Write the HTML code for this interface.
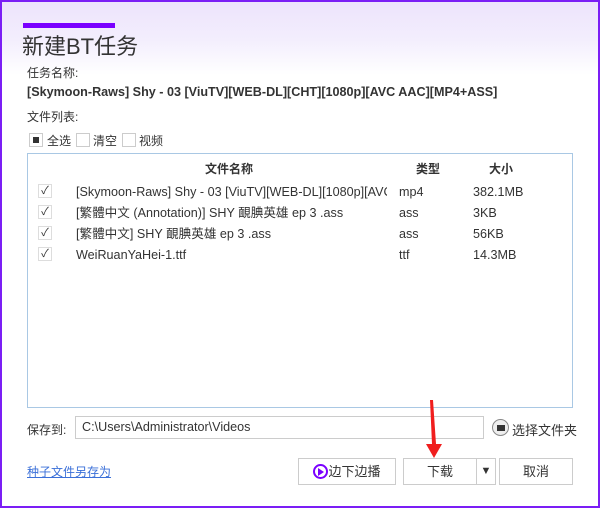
<!DOCTYPE html>
<html><head><meta charset="utf-8"><style>
*{margin:0;padding:0;box-sizing:border-box}
body{width:600px;height:508px;overflow:hidden;background:#fff;font-family:"Liberation Sans","Noto Sans CJK SC",sans-serif;color:#333;font-size:12px}
.win{position:absolute;left:0;top:0;width:600px;height:508px;background:linear-gradient(#ece3fc 0px,#f3eefd 40px,#fff 75px)}
.bd{position:absolute;left:0;top:0;width:600px;height:508px;border:2px solid #7b1ef5;pointer-events:none}
.a{position:absolute;white-space:nowrap}
.cb{position:absolute;width:14px;height:14px;border:1px solid #ccc;background:#fff}
.ck{position:absolute;width:14px;height:14px;border:1px solid #ddd;background:#fff;font-size:11px;line-height:12px;text-align:center;color:#333}
.btn{position:absolute;height:27px;border:1px solid #ccc;background:#fff;font-size:13px;text-align:center;line-height:25px}
</style></head><body><div class="win">
<div class="a" style="left:23px;top:23px;width:92px;height:5px;background:#7a00ff"></div>
<div class="a" style="left:22px;top:29px;font-size:22px;color:#333">新建BT任务</div>
<div class="a" style="left:27px;top:64px;font-size:12px">任务名称:</div>
<div class="a" style="left:27px;top:85px;font-size:12.6px;font-weight:bold">[Skymoon-Raws] Shy - 03 [ViuTV][WEB-DL][CHT][1080p][AVC AAC][MP4+ASS]</div>
<div class="a" style="left:27px;top:108px;font-size:12px">文件列表:</div>
<div class="cb" style="left:29px;top:133px"><div style="position:absolute;left:3px;top:3px;width:6px;height:6px;background:#333"></div></div>
<div class="a" style="left:47px;top:132px">全选</div>
<div class="cb" style="left:76px;top:133px"></div>
<div class="a" style="left:93px;top:132px">清空</div>
<div class="cb" style="left:122px;top:133px"></div>
<div class="a" style="left:139px;top:132px">视频</div>
<div class="a" style="left:27px;top:153px;width:546px;height:255px;border:1px solid #a9c8e4;background:#fff"></div>
<div class="a" style="left:205px;top:160px;font-weight:bold">文件名称</div>
<div class="a" style="left:416px;top:160px;font-weight:bold">类型</div>
<div class="a" style="left:489px;top:160px;font-weight:bold">大小</div>
<div class="ck" style="left:38px;top:184px">✓</div>
<div class="ck" style="left:38px;top:205px">✓</div>
<div class="ck" style="left:38px;top:226px">✓</div>
<div class="ck" style="left:38px;top:247px">✓</div>
<div class="a" style="left:76px;top:182px;line-height:21px;width:311px;overflow:hidden;font-size:12.6px">[Skymoon-Raws] Shy - 03 [ViuTV][WEB-DL][1080p][AVC<br>[繁體中文 (Annotation)] SHY 靦腆英雄 ep 3 .ass<br>[繁體中文] SHY 靦腆英雄 ep 3 .ass<br>WeiRuanYaHei-1.ttf</div>
<div class="a" style="left:399px;top:182px;line-height:21px;font-size:12.6px">mp4<br>ass<br>ass<br>ttf</div>
<div class="a" style="left:473px;top:182px;line-height:21px;font-size:12.6px">382.1MB<br>3KB<br>56KB<br>14.3MB</div>
<div class="a" style="left:27px;top:421px">保存到:</div>
<div class="a" style="left:75px;top:416px;width:409px;height:23px;border:1px solid #ccc;background:#fff;padding-left:6px;line-height:21px;font-size:12.6px">C:\Users\Administrator\Videos</div>
<div class="a" style="left:492px;top:419px;width:17px;height:17px;border:1px solid #888;border-radius:50%;background:#eee"><div style="position:absolute;left:4px;top:5px;width:8px;height:6px;background:#333"></div></div>
<div class="a" style="left:512px;top:420px;font-size:13px">选择文件夹</div>
<div class="a" style="left:27px;top:463px;color:#3a6fd8;text-decoration:underline;font-size:12px">种子文件另存为</div>
<div class="btn" style="left:298px;top:458px;width:98px"><span style="display:inline-block;width:15px;height:15px;border:2px solid #7a00ff;border-radius:50%;vertical-align:-3px;position:relative"><span style="position:absolute;left:3px;top:2px;border-left:6px solid #7a00ff;border-top:4px solid transparent;border-bottom:4px solid transparent"></span></span>边下边播</div>
<div class="btn" style="left:403px;top:458px;width:74px">下载</div>
<div class="btn" style="left:476px;top:458px;width:20px;font-size:11px">▼</div>
<div class="btn" style="left:499px;top:458px;width:74px">取消</div>
<svg class="a" style="left:420px;top:398px" width="30" height="62"><polygon points="10,2 13,2 16,46 22,46 14,60 6,46 12,46" fill="#f01e1e"/></svg>
</div><div class="bd"></div></body></html>
